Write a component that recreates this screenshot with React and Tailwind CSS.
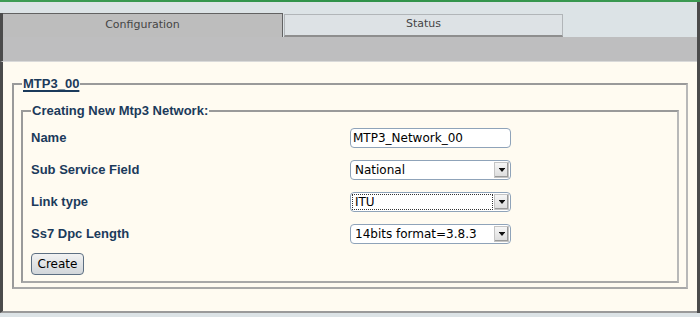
import React from "react";

const labelCls = "w-[319px] shrink-0 text-[13px] font-bold text-[#1b3a5b]";

const SelectBox = ({ value, focused }) => (
    <div className="flex h-[20px] w-[161px] items-center rounded-[4px] border border-[#8fa3b9] bg-white pl-[1px] pr-[1px]">
        <div
            className={`flex h-[16px] flex-1 items-center pl-[2px] text-[12px] text-black ${
                focused ? "border border-dotted border-[#333]" : "border border-transparent"
            }`}
        >
            {value}
        </div>
        <div className="ml-[1px] flex h-[16px] w-[15px] items-center justify-center border border-[#c4c4c4] bg-gradient-to-b from-[#f6f6f6] to-[#dcdcdc] shadow-[inset_-1px_-1px_0_#9a9a9a]">
            <svg width="6" height="5" viewBox="0 0 6 5">
                <rect x="0" y="0" width="6" height="1" fill="#111" />
                <polygon points="0.5,1 5.5,1 3,4" fill="#111" />
            </svg>
        </div>
    </div>
);

const Row = ({ label, children }) => (
    <div className="flex h-[32px] items-center">
        <div className={labelCls}>{label}</div>
        {children}
    </div>
);

export default function App() {
    return (
        <div className="h-[317px] w-[700px] overflow-hidden bg-[#dce3e6] font-['DejaVu_Sans',sans-serif]">
            <div className="h-[2px] bg-gradient-to-r from-[#3e9c55] via-[#2f9249] to-[#3c9a52]" />
            <div className="flex h-[311px] flex-col border-r-[3px] border-[#4b4b4b]">
                <div className="h-[11px]" />
                <div className="flex h-[24px] border-l-[3px] border-[#4b4b4b]">
                    <div className="flex w-[280px] items-center justify-center border-t border-r border-[#626262] bg-[#bdbdbd] text-[11px] text-[#454545]">
                        Configuration
                    </div>
                    <div className="ml-[1px] mt-[1px] flex h-[23px] w-[279px] items-center justify-center border border-b-2 border-[#b1b5b8] border-b-[#8e8e8e] bg-[#dde2e5] pb-[1px] text-[11px] text-[#454545]">
                        Status
                    </div>
                </div>
                <div className="h-[25px] border-l-[3px] border-b border-[#4b4b4b] border-b-[#d9d9d9] bg-[#bebebf]" />
                <div className="flex-1 border-l-[3px] border-b-2 border-[#4b4b4b] border-b-[#9a9a9a] bg-[#fffbf1] font-['Liberation_Sans',Arial,sans-serif]">
                    <fieldset className="mx-[9px] mt-[14px] border-2 border-t-[#9a9a9a] border-l-[#9a9a9a] border-r-[#b8b8b8] border-b-[#a8a8a8] px-[7px] pb-[4px] pt-[11px]">
                        <legend className="ml-[1px] px-[1px] text-[13px] font-bold leading-[16px] text-[#1b3a5b] underline decoration-[1.5px] underline-offset-[2px]">
                            MTP3_00
                        </legend>
                        <fieldset className="border-2 border-t-[#9a9a9a] border-l-[#9a9a9a] border-r-[#b8b8b8] border-b-[#a8a8a8] pb-[6px] pl-[8px] pr-[8px] pt-[3px]">
                            <legend className="px-[1px] text-[13px] font-bold leading-[16px] text-[#1b3a5b]">
                                Creating New Mtp3 Network:
                            </legend>
                            <Row label="Name">
                                <div className="flex h-[20px] w-[161px] items-center rounded-[4px] border border-[#8fa3b9] bg-white pl-[2px] font-['DejaVu_Sans',sans-serif] text-[12px] text-black">
                                    MTP3_Network_00
                                </div>
                            </Row>
                            <Row label="Sub Service Field">
                                <div className="font-['DejaVu_Sans',sans-serif]">
                                    <SelectBox value="National" />
                                </div>
                            </Row>
                            <Row label="Link type">
                                <div className="font-['DejaVu_Sans',sans-serif]">
                                    <SelectBox value="ITU" focused />
                                </div>
                            </Row>
                            <Row label="Ss7 Dpc Length">
                                <div className="font-['DejaVu_Sans',sans-serif]">
                                    <SelectBox value="14bits format=3.8.3" />
                                </div>
                            </Row>
                            <button
                                type="button"
                                className="mt-[3px] flex h-[22px] w-[53px] items-center justify-center rounded-[4px] border border-[#5d6f82] bg-gradient-to-b from-[#f2f2f2] to-[#d2d6da] font-['DejaVu_Sans',sans-serif] text-[12px] text-black"
                            >
                                Create
                            </button>
                        </fieldset>
                    </fieldset>
                </div>
            </div>
        </div>
    );
}
